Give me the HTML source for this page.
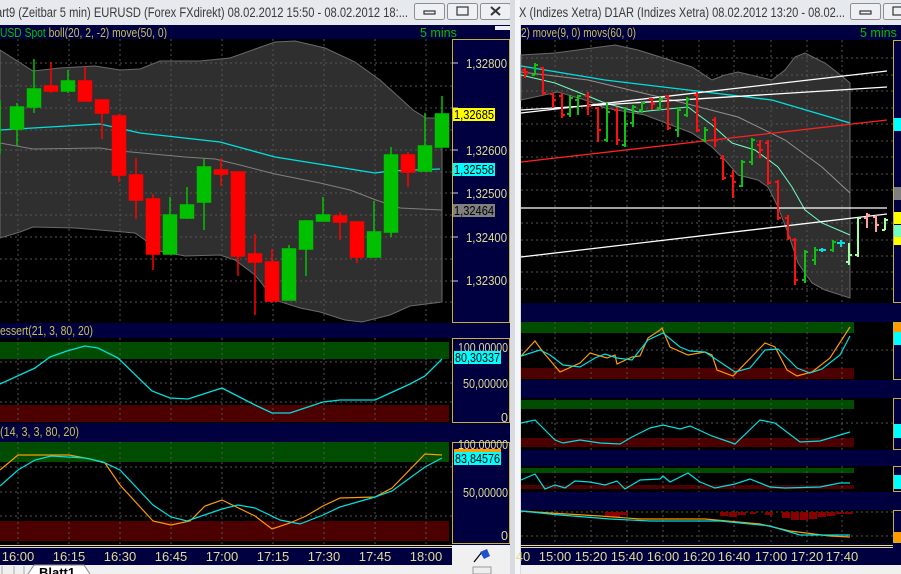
<!DOCTYPE html>
<html><head><meta charset="utf-8"><style>
html,body{margin:0;padding:0;background:#000;}
svg{display:block;font-family:"Liberation Sans",sans-serif;}
</style></head><body>
<svg width="901" height="574" viewBox="0 0 901 574" xmlns="http://www.w3.org/2000/svg">
<!-- ===== LEFT WINDOW ===== -->
<rect x="0" y="0" width="512" height="25" fill="#e6e9ed"/>
<text x="-4" y="17" font-size="13.5" fill="#3a3a3a" textLength="412" lengthAdjust="spacingAndGlyphs">art9 (Zeitbar 5 min)  EURUSD (Forex FXdirekt) 08.02.2012 15:50 - 08.02.2012 18:...</text>
<g fill="#eef0f3" stroke="#8a8f96">
<rect x="414.5" y="3.5" width="30" height="16" rx="2"/><rect x="447.5" y="3.5" width="30" height="16" rx="2"/><rect x="480.5" y="3.5" width="30" height="16" rx="2"/></g>
<rect x="424" y="11" width="11" height="3" fill="none" stroke="#333" stroke-width="1.2"/>
<rect x="457" y="7" width="11" height="8" fill="none" stroke="#333" stroke-width="1.2"/>
<path d="M491 7 L500 15 M500 7 L491 15" stroke="#333" stroke-width="2"/>
<rect x="0" y="25" width="512" height="540" fill="#000040"/>
<text x="0" y="37" font-size="12.5" fill="#00c000" textLength="167" lengthAdjust="spacingAndGlyphs">USD Spot <tspan fill="#c8c050">boll(20, 2, -2) move(50, 0)</tspan></text>
<text x="420" y="37" font-size="12.5" fill="#00c000">5 mins</text>
<rect x="495" y="26" width="15" height="4" fill="#eee"/>
<!-- main chart -->
<rect x="0" y="39" width="452" height="284" fill="#000"/>
<path d="M0,50 L33,71 L60,68 L95,66 L120,70 L140,69 L160,61 L200,61 L230,58 L275,42 L295,41 L325,48 L355,62 L380,80 L400,98 L413,110 L426,118 L442,118 L442,302 L410,306 L390,315 L362,322 L345,320 L320,312 L300,308 L275,300 L255,275 L235,260 L220,255 L185,256 L170,253 L155,250 L145,240 L135,233 L75,228 L33,227 L20,232 L0,238 Z" fill="#2f2f2f" stroke="#6a6a6a"/>
<g stroke="#555" stroke-dasharray="2,3">
<path d="M18 39V323M69 39V323M120 39V323M171 39V323M222 39V323M273 39V323M324 39V323M375 39V323M426 39V323"/>
<path d="M0 63H452M0 86H452M0 108H452M0 130H452M0 150H452M0 172H452M0 193H452M0 215H452M0 237H452M0 259H452M0 281H452M0 302H452"/>
</g>
<polyline points="0,143 33,149 100,148 120,151 185,157 215,159 240,165 275,174 320,183 350,190 376,200 400,208 442,210" fill="none" stroke="#808080"/>
<polyline points="0,130 50,127 100,124 140,133 220,142 275,157 325,165 375,173 390,171 440,169" fill="none" stroke="#00e0e0" stroke-width="1.3"/>
<g stroke-width="1.5">
<g stroke="#00c000" fill="#00c000">
<line x1="0" y1="100" x2="0" y2="154"/><rect x="-6" y="104" width="6" height="30"/>
<line x1="17" y1="103" x2="17" y2="146"/><rect x="10.5" y="107" width="13" height="22"/>
<line x1="34" y1="59" x2="34" y2="113"/><rect x="27.5" y="89" width="13" height="18"/>
<line x1="68" y1="70" x2="68" y2="93"/><rect x="61.5" y="81" width="13" height="10"/>
<line x1="170" y1="197" x2="170" y2="254"/><rect x="163.5" y="215" width="13" height="39"/>
<line x1="187" y1="187" x2="187" y2="219"/><rect x="180.5" y="205" width="13" height="13"/>
<line x1="204" y1="159" x2="204" y2="230"/><rect x="197.5" y="167" width="13" height="35"/>
<line x1="289" y1="245" x2="289" y2="300"/><rect x="282.5" y="249" width="13" height="51"/>
<line x1="306" y1="220" x2="306" y2="276"/><rect x="299.5" y="221" width="13" height="28"/>
<line x1="323" y1="197" x2="323" y2="221"/><rect x="316.5" y="215" width="13" height="6"/>
<line x1="374" y1="201" x2="374" y2="257"/><rect x="367.5" y="232" width="13" height="25"/>
<line x1="391" y1="147" x2="391" y2="237"/><rect x="384.5" y="155" width="13" height="77"/>
<line x1="425" y1="113" x2="425" y2="171"/><rect x="418.5" y="146" width="13" height="25"/>
<line x1="442" y1="96" x2="442" y2="146"/><rect x="435.5" y="114" width="13" height="33"/>
</g>
<g stroke="#ff0000" fill="#ff0000">
<line x1="51" y1="62" x2="51" y2="93"/><rect x="44.5" y="86" width="13" height="5"/>
<line x1="85" y1="66" x2="85" y2="101"/><rect x="78.5" y="81" width="13" height="20"/>
<line x1="102" y1="99" x2="102" y2="139"/><rect x="95.5" y="100" width="13" height="13"/>
<line x1="119" y1="114" x2="119" y2="182"/><rect x="112.5" y="116" width="13" height="59"/>
<line x1="136" y1="158" x2="136" y2="219"/><rect x="129.5" y="175" width="13" height="25"/>
<line x1="153" y1="194" x2="153" y2="270"/><rect x="146.5" y="199" width="13" height="55"/>
<line x1="221" y1="158" x2="221" y2="186"/><rect x="214.5" y="170" width="13" height="4"/>
<line x1="238" y1="171" x2="238" y2="276"/><rect x="231.5" y="172" width="13" height="84"/>
<line x1="255" y1="234" x2="255" y2="315"/><rect x="248.5" y="254" width="13" height="8"/>
<line x1="272" y1="249" x2="272" y2="303"/><rect x="265.5" y="262" width="13" height="39"/>
<line x1="340" y1="212" x2="340" y2="240"/><rect x="333.5" y="216" width="13" height="6"/>
<line x1="357" y1="221" x2="357" y2="263"/><rect x="350.5" y="222" width="13" height="35"/>
<line x1="408" y1="152" x2="408" y2="187"/><rect x="401.5" y="155" width="13" height="17"/>
</g></g>
<!-- left axis -->
<rect x="452.5" y="39.5" width="57" height="283" fill="#000040" stroke="#c8b040"/>
<g stroke="#ccc"><path d="M452 63h6M452 108h6M452 150h6M452 193h6M452 237h6M452 281h6"/></g>
<g font-size="12.5" fill="#e0dc90">
<text x="466" y="68" textLength="41" lengthAdjust="spacingAndGlyphs">1,32800</text><text x="466" y="155" textLength="41" lengthAdjust="spacingAndGlyphs">1,32600</text><text x="466" y="198" textLength="41" lengthAdjust="spacingAndGlyphs">1,32500</text><text x="466" y="242" textLength="41" lengthAdjust="spacingAndGlyphs">1,32400</text><text x="466" y="285" textLength="41" lengthAdjust="spacingAndGlyphs">1,32300</text></g>
<rect x="453" y="108" width="42" height="13" fill="#ffff00"/><text x="454" y="119" font-size="12.5" fill="#000" textLength="40" lengthAdjust="spacingAndGlyphs">1,32685</text>
<rect x="453" y="163" width="42" height="13" fill="#00ffff"/><text x="454" y="174" font-size="12.5" fill="#000" textLength="40" lengthAdjust="spacingAndGlyphs">1,32558</text>
<rect x="453" y="204" width="42" height="13" fill="#808080"/><text x="454" y="215" font-size="12.5" fill="#000" textLength="40" lengthAdjust="spacingAndGlyphs">1,32464</text>
<!-- indicator 1 -->
<text x="0" y="335" font-size="12.5" fill="#c8c050" textLength="93" lengthAdjust="spacingAndGlyphs">essert(21, 3, 80, 20)</text>
<rect x="0" y="338" width="452" height="85" fill="#000"/>
<rect x="0" y="342" width="449" height="17" fill="#004c00"/>
<rect x="0" y="405" width="449" height="17" fill="#4c0000"/>
<g stroke="#555" stroke-dasharray="2,3"><path d="M18 338V423M69 338V423M120 338V423M171 338V423M222 338V423M273 338V423M324 338V423M375 338V423M426 338V423M0 362H452M0 383H452M0 402H452"/></g>
<polyline points="0,384 35,368 50,357 67,351 85,346 98,348 118,358 152,391 170,398 188,399 222,388 255,405 272,413 290,413 323,402 340,400 375,400 410,384 425,376 442,359" fill="none" stroke="#00e0e0" stroke-width="1.3"/>
<rect x="452.5" y="338.5" width="57" height="84" fill="#000040" stroke="#c8b040"/>
<g font-size="12.5" fill="#e0dc90"><text x="458" y="352" textLength="50" lengthAdjust="spacingAndGlyphs">100,00000</text><text x="463" y="388" textLength="45" lengthAdjust="spacingAndGlyphs">50,00000</text><text x="501" y="422">0</text></g>
<rect x="454" y="351" width="47" height="13" fill="#00ffff"/><text x="455" y="362" font-size="12.5" fill="#000" textLength="45" lengthAdjust="spacingAndGlyphs">80,30337</text>
<!-- indicator 2 -->
<text x="0" y="436" font-size="12.5" fill="#c8c050" textLength="79" lengthAdjust="spacingAndGlyphs">(14, 3, 3, 80, 20)</text>
<rect x="0" y="442" width="452" height="102" fill="#000"/>
<rect x="0" y="442" width="449" height="20" fill="#004c00"/>
<rect x="0" y="521" width="449" height="20" fill="#4c0000"/>
<g stroke="#555" stroke-dasharray="2,3"><path d="M18 442V544M69 442V544M120 442V544M171 442V544M222 442V544M273 442V544M324 442V544M375 442V544M426 442V544M0 467H452M0 492H452M0 516H452"/></g>
<polyline points="0,470 18,455 69,455 90,459 105,463 120,485 153,521 171,525 190,521 205,506 222,500 255,516 272,529 290,523 306,516 323,506 340,498 375,497 392,488 425,454 442,455" fill="none" stroke="#ff9a00" stroke-width="1.2"/>
<polyline points="0,486 18,470 35,460 51,456 85,458 103,462 120,470 153,505 171,517 187,521 222,509 238,505 255,508 280,520 300,524 323,515 340,507 375,497 392,491 425,467 442,458" fill="none" stroke="#00e0e0" stroke-width="1.2"/>
<rect x="452.5" y="442.5" width="57" height="101" fill="#000040" stroke="#c8b040"/>
<g font-size="12.5" fill="#e0dc90"><text x="458" y="449" textLength="50" lengthAdjust="spacingAndGlyphs">100,00000</text><text x="463" y="497" textLength="45" lengthAdjust="spacingAndGlyphs">50,00000</text><text x="501" y="540">0</text></g>
<rect x="454" y="449" width="47" height="3" fill="#ff9a00"/>
<rect x="454" y="452" width="47" height="13" fill="#00ffff"/><text x="455" y="463" font-size="12.5" fill="#000" textLength="45" lengthAdjust="spacingAndGlyphs">83,84576</text>
<!-- time axis -->
<path d="M0 545.5H452M0 547.5H452" stroke="#e8e070"/>
<g font-size="13" fill="#e0dc90" text-anchor="middle"><text x="18" y="561">16:00</text><text x="69" y="561">16:15</text><text x="120" y="561">16:30</text><text x="171" y="561">16:45</text><text x="222" y="561">17:00</text><text x="273" y="561">17:15</text><text x="324" y="561">17:30</text><text x="375" y="561">17:45</text><text x="426" y="561">18:00</text></g>
<rect x="452" y="545" width="60" height="20" fill="#f0f0f0"/>
<path d="M474 562 L482 552" stroke="#000" stroke-width="1.2"/><path d="M480 552 L487 549 L490 556 L484 559 Z" fill="#2050d0"/>
<rect x="0" y="565" width="512" height="9" fill="#f0f0f0"/>
<path d="M2 566v8M14 566v8M24 566v8" stroke="#aaa"/>
<path d="M28 574 L34 565 H84 L90 574" fill="#fff" stroke="#888"/>
<text x="39" y="577" font-size="13" font-weight="bold" fill="#000">Blatt1</text>
<rect x="473" y="567" width="18" height="7" fill="#eee" stroke="#999"/>
<!-- separator -->
<rect x="510" y="0" width="11" height="574" fill="#d8dce0"/>
<rect x="515" y="0" width="5" height="574" fill="#f4f6f8"/>
<!-- ===== RIGHT WINDOW ===== -->
<rect x="520" y="0" width="381" height="25" fill="#e6e9ed"/>
<text x="519" y="17" font-size="13.5" fill="#3a3a3a" textLength="326" lengthAdjust="spacingAndGlyphs">X (Indizes Xetra) D1AR (Indizes Xetra) 08.02.2012 13:20 - 08.02...</text>
<g fill="#eef0f3" stroke="#8a8f96"><rect x="850.5" y="3.5" width="30" height="16" rx="2"/><rect x="883.5" y="3.5" width="30" height="16" rx="2"/></g>
<rect x="860" y="11" width="11" height="3" fill="none" stroke="#333" stroke-width="1.2"/>
<rect x="893" y="7" width="11" height="8" fill="none" stroke="#333" stroke-width="1.2"/>
<rect x="521" y="25" width="380" height="540" fill="#000040"/>
<text x="521" y="37" font-size="12.5" fill="#c8c050" textLength="115" lengthAdjust="spacingAndGlyphs">2) move(9, 0) movs(60, 0)</text>
<text x="860" y="37" font-size="12.5" fill="#00c000">5 mins</text>
<rect x="521" y="40" width="372" height="263" fill="#000"/>
<path d="M521,55 L555,53 L615,45 L638,50 L692,67 L712,80 L725,75 L738,72 L772,80 L785,70 L795,57 L805,53 L825,63 L838,73 L850,83 L850,298 L825,290 L812,283 L798,263 L788,233 L778,207 L768,187 L758,180 L738,175 L725,160 L712,147 L692,133 L645,115 L605,108 L585,100 L558,92 L521,100 Z" fill="#2f2f2f" stroke="#6a6a6a"/>
<g stroke="#555" stroke-dasharray="2,3"><path d="M555 40V303M591 40V303M627 40V303M663 40V303M699 40V303M734 40V303M771 40V303M807 40V303M842 40V303M521 58H893M521 75H893M521 91H893M521 108H893M521 124H893M521 141H893M521 157H893M521 174H893M521 190H893M521 223H893M521 240H893M521 256H893M521 272H893M521 289H893"/></g>
<polyline points="521,72 588,80 672,100 738,117 785,140 822,167 850,193" fill="none" stroke="#909090"/>
<polyline points="521,66 605,80 705,92 772,100 850,123" fill="none" stroke="#00e0e0" stroke-width="1.3"/>
<polyline points="521,75 555,83 605,103 638,112 688,107 712,125 732,143 755,150 778,167 792,187 805,210 822,223 850,235" fill="none" stroke="#70ffc0"/>
<g fill="none" stroke-width="1.3">
<path d="M521 113L887 71M521 110L887 87M521 208H887M521 257L887 214" stroke="#fff"/>
<path d="M521 162L887 120" stroke="#ff2020"/></g>
<g fill="none" stroke-width="2">
<path stroke="#ff1010" d="M525 67V78M522 70H525M525 72H528 M543 67V95M540 68H543M543 93H546 M553 93V108M550 94H553M553 100H556 M562 93V118M559 96H562M562 115H565 M588 92V115M585 96H588M588 106H591 M598 107V142M595 108H598M598 130H601 M617 107V145M614 110H617M617 140H620 M652 98V110M649 99H652M652 104H655 M668 95V130M665 96H668M668 128H671 M697 92V132M694 95H697M697 130H700 M715 117V147M712 120H715M715 140H718 M723 155V180M720 158H723M723 178H726 M733 170V198M730 176H733M733 182H736 M760 140V158M757 145H760M760 150H763 M768 140V185M765 143H768M768 183H771 M778 180V220M775 182H778M778 218H781 M788 215V240M785 218H788M788 238H791 M795 238V285M792 240H795M795 280H798"/>
<path stroke="#10c010" d="M535 63V75M532 75H535M535 65H538 M570 95V117M567 114H570M570 98H573 M578 95V115M575 100H578M578 96H581 M607 103V142M604 140H607M607 112H610 M625 107V147M622 145H625M625 124H628 M633 105V127M630 123H633M633 107H636 M642 102V113M639 110H642M642 103H645 M660 97V110M657 108H660M660 99H663 M678 107V137M675 130H678M678 110H681 M687 97V117M684 115H687M687 99H690 M705 127V142M702 140H705M705 130H708 M742 160V187M739 186H742M742 162H745 M752 138V165M749 162H752M752 140H755 M805 250V283M802 280H805M805 252H808 M815 247V265M812 260H815M815 250H818 M833 240V252M830 250H833M833 242H836"/>
<path stroke="#00e0e0" d="M819 250H826M822 248V252M837 243H845M841 240V247"/>
<path stroke="#a0ffa0" d="M849 243V265M846 262H849M849 255H852 M858 218V257M855 255H858M858 218H861 M885 218V230M882 230H885M885 220H888"/>
<path stroke="#ffa0a0" d="M867 213V228M864 218H867M867 215H870 M876 215V232M873 217H876M876 225H879"/>
</g>
<!-- right axis -->
<rect x="893.5" y="40.5" width="9" height="262" fill="#000040" stroke="#c8b040"/>
<rect x="894" y="118" width="7" height="13" fill="#00ffff"/><rect x="894" y="187" width="7" height="13" fill="#808080"/>
<rect x="894" y="212" width="7" height="12" fill="#ffff00"/><rect x="894" y="225" width="7" height="12" fill="#70ffc0"/><rect x="894" y="237" width="7" height="8" fill="#ffff00"/>
<!-- right panel 1 -->
<rect x="521" y="322" width="372" height="58" fill="#000"/>
<rect x="521" y="322" width="333" height="11" fill="#004c00"/><rect x="521" y="368" width="333" height="11" fill="#4c0000"/>
<g stroke="#555" stroke-dasharray="2,3"><path d="M555 322V380M591 322V380M627 322V380M663 322V380M699 322V380M734 322V380M771 322V380M807 322V380M842 322V380M521 350H893"/></g>
<polyline points="521,356 535,341 543,352 560,372 580,363 590,353 607,358 615,355 617,364 632,357 640,356 648,338 660,330 662,328 670,347 688,355 705,352 712,355 717,370 733,376 765,343 775,347 787,370 797,376 812,372 830,358 850,327" fill="none" stroke="#ff9a00" stroke-width="1.2"/>
<polyline points="521,356 540,350 550,355 563,365 580,367 595,358 605,354 617,358 632,360 648,340 663,333 680,347 690,351 705,352 720,362 735,372 750,368 765,350 778,349 797,368 810,373 822,369 840,355 850,336" fill="none" stroke="#00e0e0" stroke-width="1.2"/>
<rect x="893.5" y="322.5" width="9" height="57" fill="#000040" stroke="#c8b040"/>
<rect x="894" y="323" width="7" height="9" fill="#ff9a00"/><rect x="894" y="332" width="7" height="13" fill="#00ffff"/>
<!-- right panel 2 -->
<rect x="521" y="398" width="372" height="52" fill="#000"/>
<rect x="521" y="400" width="333" height="9" fill="#004c00"/><rect x="521" y="438" width="333" height="9" fill="#4c0000"/>
<g stroke="#555" stroke-dasharray="2,3"><path d="M555 398V450M591 398V450M627 398V450M663 398V450M699 398V450M734 398V450M771 398V450M807 398V450M842 398V450M521 423H893"/></g>
<polyline points="521,423 535,420 555,440 563,443 580,440 600,443 620,444 632,437 650,428 663,425 680,429 690,426 712,436 735,444 760,420 775,423 800,442 820,441 850,432" fill="none" stroke="#00e0e0" stroke-width="1.2"/>
<rect x="893.5" y="398.5" width="9" height="51" fill="#000040" stroke="#c8b040"/>
<rect x="894" y="424" width="7" height="14" fill="#00ffff"/>
<!-- right panel 3 -->
<rect x="521" y="466" width="372" height="26" fill="#000"/>
<rect x="521" y="468" width="333" height="5" fill="#004c00"/><rect x="521" y="485" width="333" height="4" fill="#4c0000"/>
<g stroke="#555" stroke-dasharray="2,3"><path d="M555 466V492M591 466V492M627 466V492M663 466V492M699 466V492M734 466V492M771 466V492M807 466V492M842 466V492"/></g>
<polyline points="521,480 535,474 545,489 555,485 565,488 575,481 590,482 605,485 617,481 625,489 640,480 660,479 663,476 670,482 688,473 700,482 715,488 735,484 750,479 770,487 785,488 820,487 840,483 850,483" fill="none" stroke="#00e0e0" stroke-width="1.2"/>
<rect x="893.5" y="466.5" width="9" height="25" fill="#000040" stroke="#c8b040"/>
<rect x="894" y="475" width="7" height="14" fill="#00ffff"/>
<!-- right panel 4 -->
<rect x="521" y="510" width="372" height="33" fill="#000"/>
<g stroke="#555" stroke-dasharray="2,3"><path d="M555 510V543M591 510V543M627 510V543M663 510V543M699 510V543M734 510V543M771 510V543M807 510V543M842 510V543M521 512H893M521 536H893"/></g>
<g fill="#8a0000"><rect x="605" y="512" width="8" height="4"/><rect x="612" y="512" width="8" height="5"/><rect x="620" y="512" width="8" height="3"/><rect x="720" y="512" width="8" height="4"/><rect x="729" y="512" width="8" height="5"/><rect x="738" y="512" width="8" height="3"/><rect x="750" y="512" width="6" height="2"/><rect x="765" y="512" width="8" height="3"/><rect x="782" y="512" width="8" height="6"/><rect x="791" y="512" width="8" height="8"/><rect x="800" y="512" width="8" height="8"/><rect x="809" y="512" width="8" height="7"/><rect x="818" y="512" width="8" height="5"/><rect x="827" y="512" width="8" height="4"/><rect x="836" y="512" width="8" height="2"/><rect x="845" y="512" width="8" height="2"/></g>
<polyline points="521,511 550,513 600,516 640,519 705,519 760,524 790,531 830,536 850,537" fill="none" stroke="#ff9a00" stroke-width="1.2"/>
<polyline points="521,511 560,515 610,519 650,521 720,521 770,526 800,535 850,535" fill="none" stroke="#00e0e0" stroke-width="1.2"/>
<rect x="893.5" y="510.5" width="9" height="32" fill="#000040" stroke="#c8b040"/>
<rect x="894" y="532" width="7" height="10" fill="#ff9a00"/>
<!-- right time axis -->
<path d="M521 545.5H893M521 547.5H893" stroke="#e8e070"/>
<g font-size="13" fill="#e0dc90" text-anchor="middle"><text x="523" y="561">40</text><text x="555" y="561">15:00</text><text x="591" y="561">15:20</text><text x="627" y="561">15:40</text><text x="663" y="561">16:00</text><text x="699" y="561">16:20</text><text x="734" y="561">16:40</text><text x="771" y="561">17:00</text><text x="807" y="561">17:20</text><text x="842" y="561">17:40</text></g>
<rect x="521" y="565" width="380" height="9" fill="#f0f0f0"/>
</svg>
</body></html>
